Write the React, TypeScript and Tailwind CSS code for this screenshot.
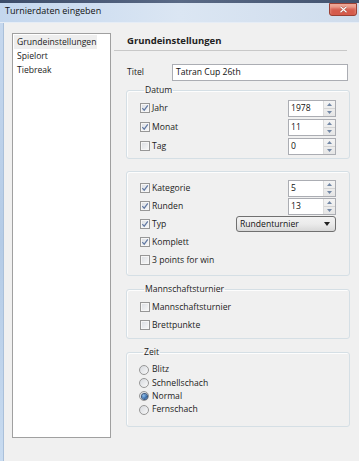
import React from 'react';

const font = "font-['Open_Sans',sans-serif]";

function Check({ on }: { on?: boolean }) {
  return (
    <span className="flex h-[10px] w-[10px] shrink-0 items-center justify-center border border-[#979797] bg-gradient-to-br from-[#dadde2] to-[#f9f9f9] shadow-[inset_0_0_0_1px_#f6f6f6]">
      {on && (
        <svg width="8" height="8" viewBox="0 0 8 8">
          <path d="M1.3 4.2 L3.2 6.2 L6.8 1.4" fill="none" stroke="#6179a3" strokeWidth="1.2" />
        </svg>
      )}
    </span>
  );
}

function Radio({ on }: { on?: boolean }) {
  return (
    <span className="flex h-[10px] w-[10px] shrink-0 items-center justify-center rounded-full border border-[#979797] bg-gradient-to-br from-[#d6d9de] to-[#f9f9f9]">
      {on && <span className="h-[5px] w-[5px] rounded-full bg-[radial-gradient(circle_at_35%_35%,#8fc0ee,#2a5f9f_70%)] shadow-[0_0_0_1px_#3d5a80]" />}
    </span>
  );
}

function Spin({ value }: { value: string }) {
  return (
    <div className="flex h-[17px] w-[48px] border border-[#abadb3] bg-white">
      <span className="flex-1 pl-[2px] leading-[15px] text-[#111]">{value}</span>
      <div className="flex w-[12px] flex-col border-l border-[#dcdcdc] bg-gradient-to-b from-[#f4f4f4] to-[#e6e6e6]">
        <div className="flex flex-1 items-center justify-center border-b border-[#d4d4d4]">
          <svg width="5" height="3" viewBox="0 0 5 3"><path d="M0 3 L2.5 0 L5 3Z" fill="#7388a6" /></svg>
        </div>
        <div className="flex flex-1 items-center justify-center">
          <svg width="5" height="3" viewBox="0 0 5 3"><path d="M0 0 L2.5 3 L5 0Z" fill="#7388a6" /></svg>
        </div>
      </div>
    </div>
  );
}

function CheckRow({ label, on, children }: { label: string; on?: boolean; children?: React.ReactNode }) {
  return (
    <div className="flex h-[18px] items-center justify-between">
      <div className="flex items-center gap-[2px]">
        <Check on={on} />
        <span>{label}</span>
      </div>
      {children}
    </div>
  );
}

function Group({ legend, className, children }: { legend?: string; className?: string; children: React.ReactNode }) {
  return (
    <fieldset className={`rounded-[3px] border border-[#d5dfe5] px-[13px] shadow-[inset_1px_1px_0_#fdfdfd] ${className ?? ''}`}>
      {legend && <legend className="ml-[4px] px-[1px] leading-[14px]">{legend}</legend>}
      {children}
    </fieldset>
  );
}

export default function App() {
  return (
    <div className={`${font} h-[461px] w-[359px] overflow-hidden bg-[#f0f0f0] text-[8.6px] text-[#1b1b1b]`}>
      {/* title bar */}
      <div className="flex h-[22px] flex-col bg-gradient-to-r from-[#c4d7ee] via-[#dbe6f3] to-[#cfdcec]">
        <div className="h-[3px] bg-gradient-to-r from-[#3c4c69] via-[#5a6a86] to-[#42526e]" />
        <div className="flex flex-1 items-start justify-between pl-[5px] pr-[2px]">
          <span className="text-[9px] leading-[16px] text-[#111]">Turnierdaten eingeben</span>
          <div className="flex h-[13px] w-[28px] shrink-0 items-center justify-center rounded-b-[3px] border border-[#9a4034] bg-[#d55b4c] shadow-[inset_0_4px_3px_#eea696]">
            <svg width="9" height="7" viewBox="0 0 9 7">
              <path d="M1.5 0.8 L7.5 6.2 M7.5 0.8 L1.5 6.2" stroke="#a04a3e" strokeWidth="2.2" />
              <path d="M1.5 0.8 L7.5 6.2 M7.5 0.8 L1.5 6.2" stroke="#fff" strokeWidth="1.2" />
            </svg>
          </div>
        </div>
      </div>

      <div className="flex h-[439px] border-t border-[#e6edf6]">
        {/* window frame */}
        <div className="w-[4px] border-r border-[#aac0da] bg-gradient-to-b from-[#c6d8ee] via-[#b4cbe6] to-[#c8dbf0]" />

        {/* tree list */}
        <div className="ml-[8px] mt-[10px] flex h-[405px] w-[99px] flex-col border border-[#a0a0a0] bg-white p-[1px]">
          <div className="w-fit bg-[#eeeeee] pl-[3px] pr-[1px] leading-[14px]">Grundeinstellungen</div>
          <div className="pl-[3px] leading-[14px]">Spielort</div>
          <div className="pl-[3px] leading-[14px]">Tiebreak</div>
        </div>

        {/* content */}
        <div className="ml-[3px] mt-[10px] flex w-[236px] flex-col">
          <div className="mr-[3px] h-[18px] border-b border-[#c8c8c8] pl-[13px] text-[9.5px] font-bold leading-[16px] text-[#222]">
            Grundeinstellungen
          </div>

          <div className="mt-[13px] flex h-[17px] items-center justify-between pl-[13px] pr-[2px]">
            <span>Titel</span>
            <div className="h-[17px] w-[176px] border border-[#abadb3] bg-white pl-[3px] leading-[15px] text-[#111]">Tatran Cup 26th</div>
          </div>

          <div className="ml-[12px] flex flex-col">
            <Group legend="Datum" className="mt-[2px] pb-[3px] pt-[2px]">
              <div className="flex flex-col gap-[1px]">
                <CheckRow label="Jahr" on><Spin value="1978" /></CheckRow>
                <CheckRow label="Monat" on><Spin value="11" /></CheckRow>
                <CheckRow label="Tag"><Spin value="0" /></CheckRow>
              </div>
            </Group>

            <Group className="mt-[12px] pb-[6px] pt-[7px]">
              <CheckRow label="Kategorie" on><Spin value="5" /></CheckRow>
              <CheckRow label="Runden" on><Spin value="13" /></CheckRow>
              <CheckRow label="Typ" on>
                <div className="flex h-[16px] w-[100px] items-center justify-between rounded-[3px] border border-[#707070] bg-gradient-to-b from-[#f2f2f2] via-[#ebebeb] to-[#d8d8d8] pl-[3px] pr-[5px]">
                  <span className="text-[#111]">Rundenturnier</span>
                  <svg width="6" height="4" viewBox="0 0 6 4"><path d="M0 0 L6 0 L3 4Z" fill="#222" /></svg>
                </div>
              </CheckRow>
              <CheckRow label="Komplett" on />
              <CheckRow label="3 points for win" />
            </Group>

            <Group legend="Mannschaftsturnier" className="mt-[6px] pb-[4px] pt-[2px]">
              <CheckRow label="Mannschaftsturnier" />
              <CheckRow label="Brettpunkte" />
            </Group>

            <Group legend="Zeit" className="mt-[6px] pb-[9px] pl-[12px] pt-[4px]">
              {[
                { label: 'Blitz' },
                { label: 'Schnellschach' },
                { label: 'Normal', on: true },
                { label: 'Fernschach' },
              ].map(r => (
                <div key={r.label} className="flex h-[13.4px] items-center gap-[3px]">
                  <Radio on={r.on} />
                  <span>{r.label}</span>
                </div>
              ))}
            </Group>
          </div>
        </div>
      </div>
    </div>
  );
}
